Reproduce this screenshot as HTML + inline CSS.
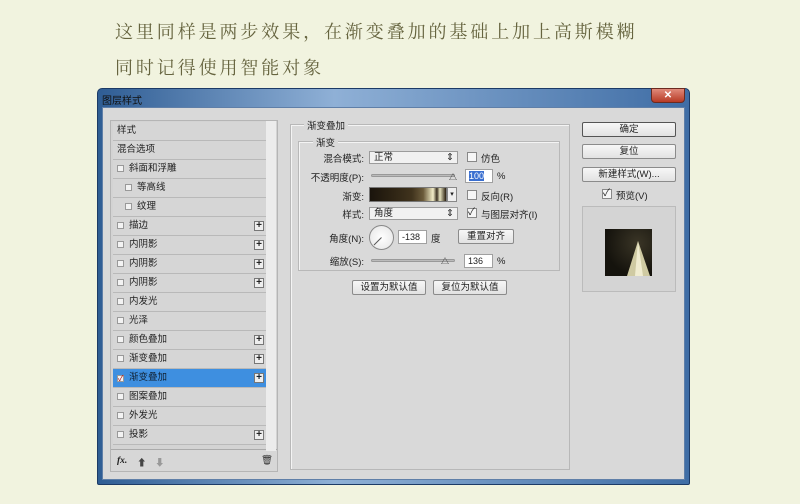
<!DOCTYPE html>
<html><head><meta charset="utf-8"><style>
*{margin:0;padding:0;box-sizing:border-box}
body{width:800px;height:504px;background:#f1f3df;font-family:"Liberation Sans","Noto Sans CJK SC",sans-serif;position:relative;overflow:hidden;font-size:10px;color:#222}
.h{position:absolute;left:115px;font-size:18px;letter-spacing:2.9px;color:#66643f;font-family:"Liberation Serif","Noto Serif CJK SC",serif}
.abs{position:absolute}
.frame{left:97px;top:88px;width:593px;height:397px;background:linear-gradient(90deg,#2f5d94,#8fb0d6 40%,#3f6da5);border:1px solid #1c3a66;border-radius:5px 5px 2px 2px}
.title{left:102px;top:92px;font-size:10px;color:#111}
.client{left:102px;top:107px;width:583px;height:373px;background:#d9d9d9;border:1px solid #5f7fa8}
.close{left:651px;top:88px;width:34px;height:15px;background:linear-gradient(#e08a7a,#b73a25);border:1px solid #6b2a20;border-radius:0 0 4px 4px;color:#fff;font-size:10px;text-align:center;line-height:13px;font-weight:bold}
.list{left:110px;top:120px;width:168px;height:352px;background:#d3d3d3;border:1px solid #b5b5b5}
.row{position:absolute;left:2px;width:154px;height:19px;border-bottom:1px solid #b9b9b9;background:#d6d6d6;font-size:9.5px;line-height:18px;padding-left:4px}
.row.sel{background:#3e8fe0;color:#123}
.cb{display:inline-block;width:7px;height:7px;border:1px solid #999;background:#f3f3f3;margin-right:5px;vertical-align:-1px}
.plus{position:absolute;right:3px;top:4px;width:10px;height:10px;border:1px solid #777;background:#eee;font-size:10px;line-height:8px;text-align:center;font-weight:bold}
.sb{left:266px;top:121px;width:10px;height:330px;background:#ececec}
.grp{border:1px solid #b8b8b8;box-shadow:1px 1px 0 #f4f4f4 inset}
.lbl{position:absolute;font-size:9.5px;text-align:right;width:70px}
.sel2{position:absolute;height:13px;background:#f1f1f1;border:1px solid #9c9c9c;font-size:9.5px;line-height:11px;padding-left:4px}
.btn{position:absolute;height:15px;background:linear-gradient(#f7f7f7,#e2e2e2);border:1px solid #8b8b8b;font-size:9.5px;text-align:center;line-height:13px;border-radius:2px}
.inp{position:absolute;height:14px;background:#fff;border:1px solid #a0a0a0;font-size:9px;line-height:12px;padding-left:3px}
.slider{position:absolute;height:3px;background:#bbb;border:1px solid #999;border-radius:2px}
.chk{position:absolute;width:10px;height:10px;border:1px solid #888;background:#f6f6f6}
.t{position:absolute;font-size:9.5px}
</style></head><body>
<div class="h" style="top:18px">这里同样是两步效果，在渐变叠加的基础上加上高斯模糊</div>
<div class="h" style="top:54px">同时记得使用智能对象</div>

<div class="abs frame"></div>
<div class="abs title">图层样式</div>
<div class="abs close">✕</div>
<div class="abs client"></div>

<div class="abs list">
<div class="row" style="top:1px">样式</div>
<div class="row" style="top:20px">混合选项</div>
<div class="row" style="top:39px"><span class="cb"></span>斜面和浮雕</div>
<div class="row" style="top:58px;padding-left:12px"><span class="cb"></span>等高线</div>
<div class="row" style="top:77px;padding-left:12px"><span class="cb"></span>纹理</div>
<div class="row" style="top:96px"><span class="cb"></span>描边<span class="plus">+</span></div>
<div class="row" style="top:115px"><span class="cb"></span>内阴影<span class="plus">+</span></div>
<div class="row" style="top:134px"><span class="cb"></span>内阴影<span class="plus">+</span></div>
<div class="row" style="top:153px"><span class="cb"></span>内阴影<span class="plus">+</span></div>
<div class="row" style="top:172px"><span class="cb"></span>内发光</div>
<div class="row" style="top:191px"><span class="cb"></span>光泽</div>
<div class="row" style="top:210px"><span class="cb"></span>颜色叠加<span class="plus">+</span></div>
<div class="row" style="top:229px"><span class="cb"></span>渐变叠加<span class="plus">+</span></div>
<div class="row sel" style="top:248px"><span class="cb" style="font-size:8px;line-height:6px;color:#a00">✓</span>渐变叠加<span class="plus">+</span></div>
<div class="row" style="top:267px"><span class="cb"></span>图案叠加</div>
<div class="row" style="top:286px"><span class="cb"></span>外发光</div>
<div class="row" style="top:305px"><span class="cb"></span>投影<span class="plus">+</span></div>
<div class="abs" style="left:0;top:328px;width:166px;height:22px;border-top:1px solid #aaa;background:#d7d7d7"></div>
<div class="t" style="left:6px;top:335px;font-style:italic;font-weight:bold;font-family:'Liberation Serif',serif">fx.</div>
<div class="t" style="left:26px;top:334px;color:#444">⬆</div>
<div class="t" style="left:44px;top:334px;color:#999">⬇</div>
<div class="t" style="left:150px;top:334px;color:#333">🗑</div>
</div>
<div class="abs sb"></div>

<div class="abs grp" style="left:290px;top:124px;width:280px;height:346px"></div>
<div class="t" style="left:304px;top:118px;background:#d9d9d9;padding:0 3px">渐变叠加</div>
<div class="abs grp" style="left:298px;top:141px;width:262px;height:130px"></div>
<div class="t" style="left:313px;top:135px;background:#d9d9d9;padding:0 3px">渐变</div>

<div class="lbl" style="left:294px;top:151px">混合模式:</div>
<div class="sel2" style="left:369px;top:151px;width:89px">正常<span style="position:absolute;right:3px">⇕</span></div>
<div class="chk" style="left:467px;top:152px"></div><div class="t" style="left:481px;top:151px">仿色</div>

<div class="lbl" style="left:294px;top:170px">不透明度(P):</div>
<div class="slider" style="left:371px;top:174px;width:84px"></div>
<div class="t" style="left:449px;top:172px;font-size:8px">△</div>
<div class="inp" style="left:465px;top:169px;width:28px"><span style="background:#3a6fd0;color:#fff">100</span></div>
<div class="t" style="left:497px;top:171px">%</div>

<div class="lbl" style="left:294px;top:189px">渐变:</div>
<div class="abs" style="left:369px;top:187px;width:78px;height:15px;border:1px solid #777;background:linear-gradient(90deg,#1a140c,#2e2414 30%,#40331d 55%,#6a5a3a 70%,#f2edc8 83%,#3a3020 88%,#e8e4c0 92%,#2a2010)"></div>
<div class="abs" style="left:447px;top:187px;width:10px;height:15px;border:1px solid #888;background:#eee;font-size:7px;text-align:center;line-height:13px">▾</div>
<div class="chk" style="left:467px;top:190px"></div><div class="t" style="left:481px;top:189px">反向(R)</div>

<div class="lbl" style="left:294px;top:207px">样式:</div>
<div class="sel2" style="left:369px;top:207px;width:89px">角度<span style="position:absolute;right:3px">⇕</span></div>
<div class="chk" style="left:467px;top:208px;font-size:10px;line-height:8px">✓</div><div class="t" style="left:481px;top:207px">与图层对齐(I)</div>

<div class="lbl" style="left:294px;top:231px">角度(N):</div>
<div class="abs" style="left:369px;top:225px;width:25px;height:25px;border-radius:50%;border:1px solid #888;background:radial-gradient(#fff,#e4e4e4)"></div>
<svg class="abs" style="left:369px;top:225px" width="25" height="25"><line x1="12.5" y1="12.5" x2="5" y2="20" stroke="#555"/></svg>
<div class="inp" style="left:398px;top:230px;width:29px">-138</div>
<div class="t" style="left:431px;top:231px">度</div>
<div class="btn" style="left:458px;top:229px;width:56px">重置对齐</div>

<div class="lbl" style="left:294px;top:254px">缩放(S):</div>
<div class="slider" style="left:371px;top:259px;width:84px"></div>
<div class="t" style="left:441px;top:256px;font-size:8px">△</div>
<div class="inp" style="left:464px;top:254px;width:29px">136</div>
<div class="t" style="left:497px;top:256px">%</div>

<div class="btn" style="left:352px;top:280px;width:74px">设置为默认值</div>
<div class="btn" style="left:433px;top:280px;width:74px">复位为默认值</div>

<div class="btn" style="left:582px;top:122px;width:94px;border-color:#555">确定</div>
<div class="btn" style="left:582px;top:144px;width:94px">复位</div>
<div class="btn" style="left:582px;top:167px;width:94px">新建样式(W)...</div>
<div class="chk" style="left:602px;top:189px;font-size:10px;line-height:8px">✓</div><div class="t" style="left:616px;top:188px">预览(V)</div>
<div class="abs" style="left:582px;top:206px;width:94px;height:86px;border:1px solid #bbb;background:#d4d4d4"></div>
<div class="abs" style="left:605px;top:229px;width:47px;height:47px;background:radial-gradient(circle at 70% 30%,#3a3526,#15130d 70%)"></div>
<svg class="abs" style="left:605px;top:229px" width="47" height="47"><polygon points="33,12 22,47 45,47" fill="#cfcaa2"/><polygon points="33,12 30,47 38,47" fill="#f0ecd0"/></svg>
</body></html>
